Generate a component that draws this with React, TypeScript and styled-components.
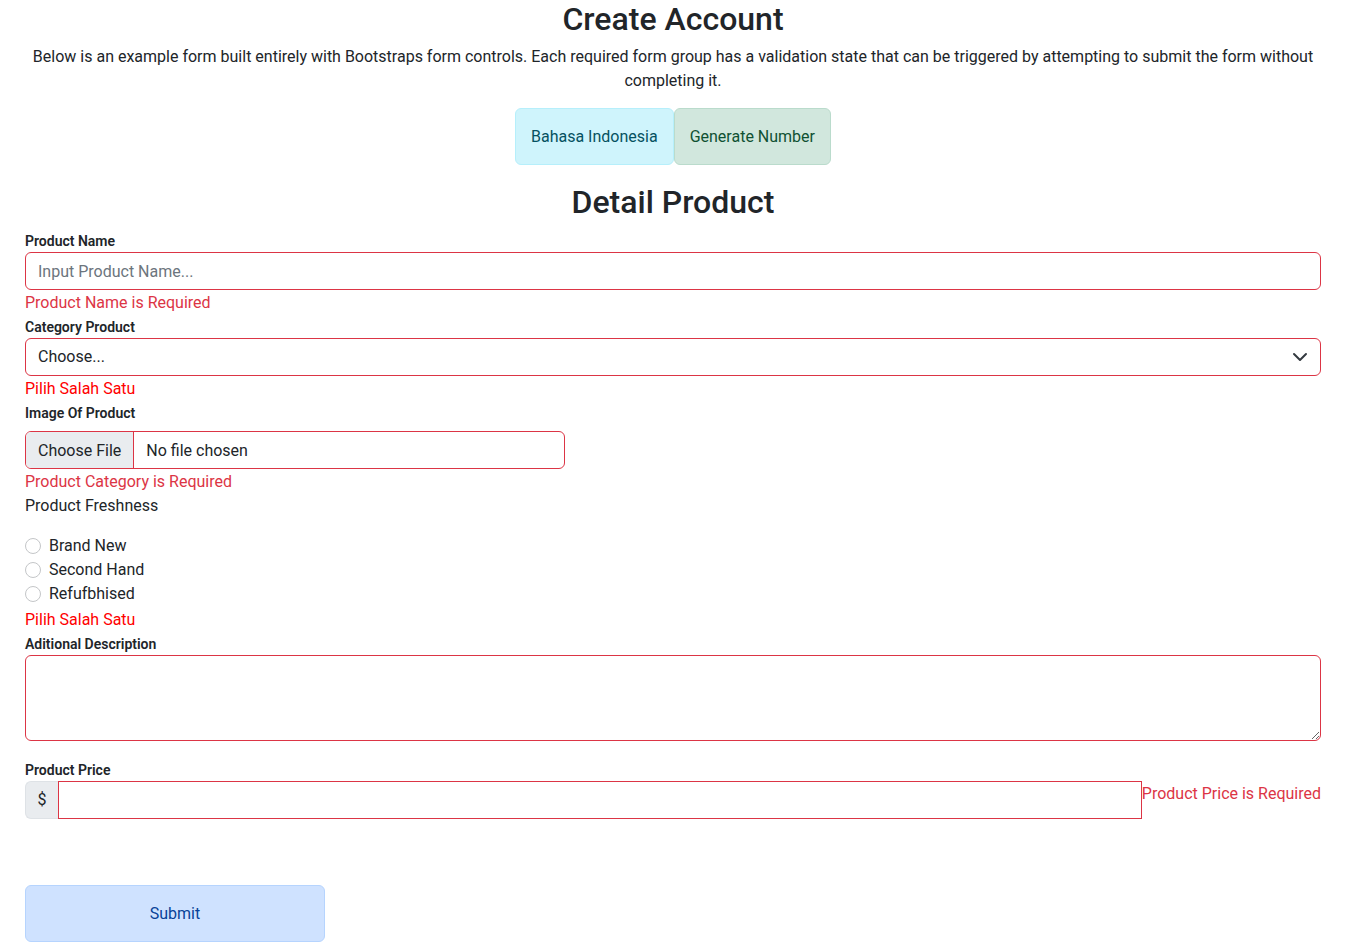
import React from 'react'
import styled, { createGlobalStyle } from 'styled-components'

const GlobalStyle = createGlobalStyle`
  * { box-sizing: border-box; }
  body {
    margin: 0;
    background: #fff;
    color: #212529;
    font-family: Roboto, "Liberation Sans", Arial, sans-serif;
    font-size: 16px;
    line-height: 24px;
  }
`

const Page = styled.div`
  padding: 0 33px 0 25px;
`

const Title = styled.h2`
  margin: 0;
  font-size: 32px;
  font-weight: 500;
  line-height: 38px;
  text-align: center;
`

const Lead = styled.p`
  margin: 7px 0 0;
  text-align: center;
  padding: 0 6px;
`

const ButtonRow = styled.div`
  display: flex;
  justify-content: center;
  margin-top: 15px;
`

const tones = {
  info: { bg: '#cff4fc', border: '#b6effb', color: '#055160' },
  success: { bg: '#d1e7dd', border: '#badbcc', color: '#0f5132' },
  primary: { bg: '#cfe2ff', border: '#b6d4fe', color: '#084298' },
}

const SoftButton = styled.button<{ $tone: keyof typeof tones; $width?: number }>`
  height: 57px;
  padding: 1px 15px 0;
  ${(p) => (p.$width ? `width: ${p.$width}px;` : '')}
  background: ${(p) => tones[p.$tone].bg};
  border: 1px solid ${(p) => tones[p.$tone].border};
  color: ${(p) => tones[p.$tone].color};
  border-radius: 6px;
  font: inherit;
  cursor: pointer;
`

const Heading = styled.h2`
  margin: 18px 0 0;
  font-size: 32px;
  font-weight: 500;
  line-height: 38px;
  text-align: center;
`

const Form = styled.form`
  display: flex;
  flex-direction: column;
  margin-top: 10px;
`

const Label = styled.label<{ $top?: number; $bottom?: number }>`
  display: block;
  margin-top: ${(p) => p.$top ?? 3}px;
  margin-bottom: ${(p) => p.$bottom ?? 0}px;
  font-size: 14px;
  font-weight: 600;
  line-height: 21px;
`

const PlainLabel = styled.div`
  font-size: 16px;
  line-height: 24px;
  padding-top: 1px;
  margin-bottom: -1px;
`

const fieldBase = `
  display: block;
  width: 100%;
  border: 1px solid #dc3545;
  border-radius: 6px;
  background: #fff;
  color: #212529;
  font: inherit;
  padding: 6px 12px;
  outline: none;
`

const TextInput = styled.input`
  ${fieldBase}
  height: 38px;
  &::placeholder { color: #6c757d; opacity: 1; }
`

const SelectWrap = styled.div`
  position: relative;
`

const Select = styled.select`
  ${fieldBase}
  height: 38px;
  appearance: none;
  padding-right: 36px;
`

const Chevron = styled.svg`
  position: absolute;
  right: 13px;
  top: 13px;
  pointer-events: none;
`

const FileInput = styled.input`
  ${fieldBase}
  width: 540px;
  height: 38px;
  overflow: hidden;
  &::file-selector-button {
    margin: -6px 12px -6px -12px;
    padding: 6px 12px;
    height: 38px;
    border: 0;
    border-right: 1px solid #dc3545;
    border-radius: 0;
    background: #e9ecef;
    color: #212529;
    font: inherit;
  }
`

const Feedback = styled.div<{ $tone?: 'danger' | 'red'; $top?: number }>`
  margin-top: ${(p) => p.$top ?? 0}px;
  color: ${(p) => (p.$tone === 'red' ? '#ff0000' : '#dc3545')};
  font-size: 16px;
  line-height: 24px;
  padding-top: 1px;
  margin-bottom: -1px;
`

const RadioList = styled.div`
  display: flex;
  flex-direction: column;
  margin-top: 16px;
`

const RadioRow = styled.label`
  display: flex;
  align-items: center;
  gap: 8px;
  height: 24px;
  padding-top: 1px;
`

const Radio = styled.input`
  appearance: none;
  margin: 0;
  width: 16px;
  height: 16px;
  border: 1px solid #c4c6c8;
  border-radius: 50%;
  background: #fff;
`

const TextArea = styled.textarea`
  ${fieldBase}
  height: 86px;
  resize: vertical;
`

const InputGroup = styled.div`
  display: flex;
  align-items: flex-start;
`

const Addon = styled.span`
  display: flex;
  align-items: center;
  justify-content: center;
  width: 33px;
  height: 38px;
  background: #e9ecef;
  border: 1px solid #dee2e6;
  border-right: 0;
  border-radius: 6px 0 0 6px;
`

const PriceInput = styled.input`
  ${fieldBase}
  flex: 1;
  width: auto;
  min-width: 0;
  height: 38px;
  border-radius: 0;
`

const SubmitRow = styled.div`
  margin-top: 66px;
`

export default function App() {
  return (
    <>
      <GlobalStyle />
      <Page>
        <Title>Create Account</Title>
        <Lead>
          Below is an example form built entirely with Bootstraps form controls. Each required form group has a
          validation state that can be triggered by attempting to submit the form without completing it.
        </Lead>
        <ButtonRow>
          <SoftButton type="button" $tone="info">
            Bahasa Indonesia
          </SoftButton>
          <SoftButton type="button" $tone="success">
            Generate Number
          </SoftButton>
        </ButtonRow>
        <Heading>Detail Product</Heading>

        <Form onSubmit={(e) => e.preventDefault()}>
          <Label htmlFor="productName" $top={0}>
            Product Name
          </Label>
          <TextInput id="productName" placeholder="Input Product Name..." />
          <Feedback>Product Name is Required</Feedback>

          <Label htmlFor="category">Category Product</Label>
          <SelectWrap>
            <Select id="category" defaultValue="">
              <option value="">Choose...</option>
              <option value="1">Electronics</option>
              <option value="2">Fashion</option>
            </Select>
            <Chevron width="16" height="12" viewBox="0 2 16 12" fill="none">
              <path d="m2 5 6 6 6-6" stroke="#343a40" strokeWidth="2" strokeLinecap="round" strokeLinejoin="round" />
            </Chevron>
          </SelectWrap>
          <Feedback $tone="red">Pilih Salah Satu</Feedback>

          <Label htmlFor="image" $bottom={7}>
            Image Of Product
          </Label>
          <FileInput id="image" type="file" />
          <Feedback>Product Category is Required</Feedback>

          <PlainLabel>Product Freshness</PlainLabel>
          <RadioList>
            {['Brand New', 'Second Hand', 'Refufbhised'].map((item) => (
              <RadioRow key={item}>
                <Radio type="radio" name="freshness" value={item} />
                {item}
              </RadioRow>
            ))}
          </RadioList>
          <Feedback $tone="red" $top={2}>
            Pilih Salah Satu
          </Feedback>

          <Label htmlFor="description">Aditional Description</Label>
          <TextArea id="description" rows={3} />

          <Label htmlFor="price" $top={19}>
            Product Price
          </Label>
          <InputGroup>
            <Addon>$</Addon>
            <PriceInput id="price" />
            <Feedback>Product Price is Required</Feedback>
          </InputGroup>

          <SubmitRow>
            <SoftButton type="submit" $tone="primary" $width={300}>
              Submit
            </SoftButton>
          </SubmitRow>
        </Form>
      </Page>
    </>
  )
}
